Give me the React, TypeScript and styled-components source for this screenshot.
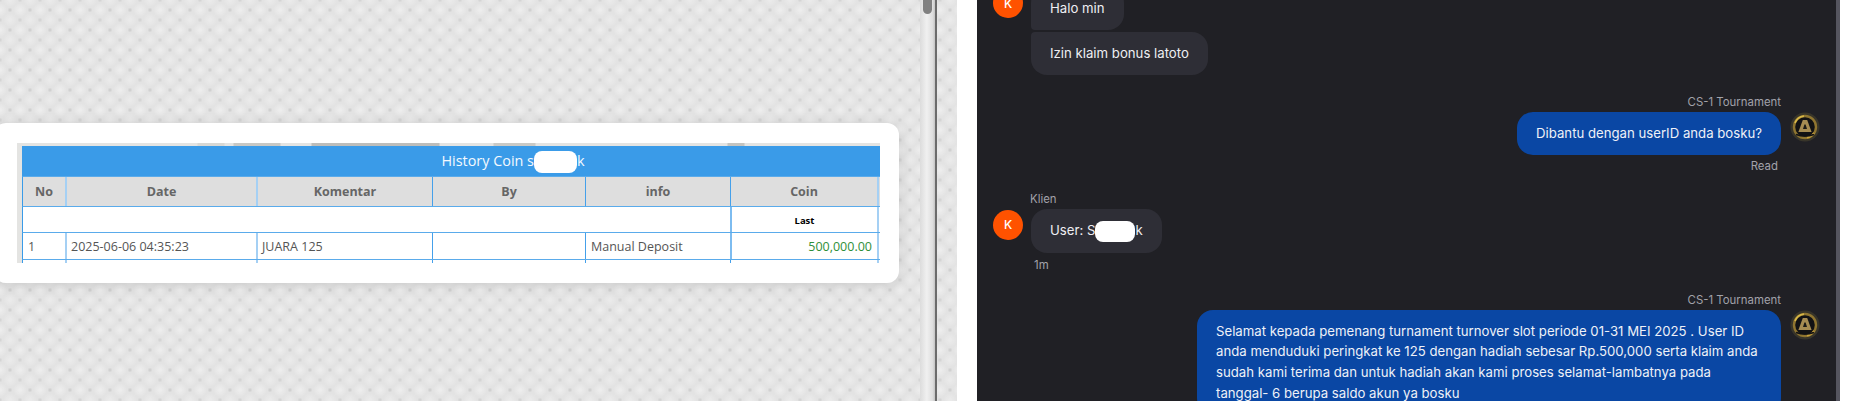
import React from "react";
import styled, { createGlobalStyle } from "styled-components";

const GlobalStyle = createGlobalStyle`
  html, body {
    margin: 0;
    padding: 0;
    background: #ffffff;
    overflow: hidden;
  }
  * {
    box-sizing: border-box;
  }
`;

const COLUMNS = "42px 191px 176px 153px 145px 147px 1fr";

export default function App() {
  return (
    <>
      <GlobalStyle />
      <Screen>
        <AdminPane>
          <AdminMain>
            <Card>
              <TableFrame>
                <TopStrip />
                <TableBody>
                  <TableTitle>
                    History Coin s
                    <Redact $w={43} $h={22} />k
                  </TableTitle>
                  <TableRow $h={30} $header>
                    <HeadCell>No</HeadCell>
                    <HeadCell $soft>Date</HeadCell>
                    <HeadCell $soft>Komentar</HeadCell>
                    <HeadCell>By</HeadCell>
                    <HeadCell>info</HeadCell>
                    <HeadCell>Coin</HeadCell>
                    <HeadCell $soft />
                  </TableRow>
                  <TableRow $h={26}>
                    <BlankCell />
                    <LastCell>Last</LastCell>
                    <DataCell $soft />
                  </TableRow>
                  <TableRow $h={27}>
                    <DataCell>1</DataCell>
                    <DataCell $soft>2025-06-06 04:35:23</DataCell>
                    <DataCell $soft>JUARA 125</DataCell>
                    <DataCell />
                    <DataCell>Manual Deposit</DataCell>
                    <AmountCell>500,000.00</AmountCell>
                    <DataCell $soft />
                  </TableRow>
                  <TableRow $h={10}>
                    <DataCell />
                    <DataCell $soft />
                    <DataCell $soft />
                    <DataCell />
                    <DataCell />
                    <DataCell />
                    <DataCell $soft />
                  </TableRow>
                </TableBody>
              </TableFrame>
            </Card>
          </AdminMain>
          <ScrollTrack>
            <ScrollThumb />
          </ScrollTrack>
          <PaneDivider />
          <TextureStrip />
        </AdminPane>

        <Gutter />

        <ChatPane>
          <IncomingGroup $top={-13}>
            <IncomingRow>
              <ClientAvatar $shift={1}>K</ClientAvatar>
              <BubbleStack>
                <ClientBubble $corner="first">Halo min</ClientBubble>
                <ClientBubble $corner="last">Izin klaim bonus latoto</ClientBubble>
              </BubbleStack>
            </IncomingRow>
          </IncomingGroup>

          <OutgoingGroup $top={20}>
            <AgentName>CS-1 Tournament</AgentName>
            <OutgoingRow>
              <AgentBubble>Dibantu dengan userID anda bosku?</AgentBubble>
              <AgentAvatar />
            </OutgoingRow>
            <ReadMark>Read</ReadMark>
          </OutgoingGroup>

          <IncomingGroup $top={19}>
            <ClientName>Klien</ClientName>
            <IncomingRow>
              <ClientAvatar $shift={1}>K</ClientAvatar>
              <ClientBubble>
                User: S
                <Redact $w={40} $h={21} />k
              </ClientBubble>
            </IncomingRow>
            <TimeMark>1m</TimeMark>
          </IncomingGroup>

          <OutgoingGroup $top={21}>
            <AgentName>CS-1 Tournament</AgentName>
            <OutgoingRow>
              <AgentBubble $wide>
                Selamat kepada pemenang turnament turnover slot periode 01-31 MEI 2025 . User ID
                anda menduduki peringkat ke 125 dengan hadiah sebesar Rp.500,000 serta klaim anda
                sudah kami terima dan untuk hadiah akan kami proses selamat-lambatnya pada
                tanggal- 6 berupa saldo akun ya bosku
              </AgentBubble>
              <AgentAvatar />
            </OutgoingRow>
          </OutgoingGroup>
        </ChatPane>

        <ChatEdge />
      </Screen>
    </>
  );
}

function AgentAvatar() {
  return (
    <AvatarBadge viewBox="0 0 30 30" aria-hidden="true">
      <circle cx="15" cy="15" r="14.5" fill="#38352a" />
      <circle cx="15" cy="15" r="11" fill="#121214" stroke="#8f7530" strokeWidth="2.4" />
      <path d="M5 11a11 11 0 0 1 9-7" fill="none" stroke="#d8b848" strokeWidth="1.6" />
      <path d="M24 21a11 11 0 0 1-7 4.8" fill="none" stroke="#c8a23c" strokeWidth="1.6" />
      <path d="M12.8 8h4.4L21.6 20H8.4z" fill="#a68c52" />
      <path d="M14.4 12.5h1.2l1.4 4.5h-4z" fill="#1c1a16" />
      <path d="M6 22.5q9 3 18 0" fill="none" stroke="#121214" strokeWidth="1.6" />
    </AvatarBadge>
  );
}

const Screen = styled.div`
  display: flex;
  width: 1852px;
  height: 401px;
  overflow: hidden;
  background: #ffffff;
`;

/* left window: coin history popup on a woven grey wallpaper */
const AdminPane = styled.div`
  display: flex;
  flex: 0 0 957px;
  height: 100%;
  background-color: #e3e3e3;
  background-image:
    radial-gradient(circle, #cbcbcb 0, rgba(203, 203, 203, 0) 2.5px),
    radial-gradient(circle, #d0d0d0 0, rgba(208, 208, 208, 0) 2.5px),
    radial-gradient(circle, #eeeeee 0, rgba(238, 238, 238, 0) 7px),
    radial-gradient(circle, #ebebeb 0, rgba(235, 235, 235, 0) 7px);
  background-size: 20px 20px;
  background-position: 0 0, 10px 10px, 10px 0, 0 10px;
`;

const AdminMain = styled.div`
  flex: 0 0 920px;
  padding-top: 123px;
  overflow: hidden;
`;

const Card = styled.div`
  width: 905px;
  height: 160px;
  margin-left: -6px;
  padding: 20px 19px 20px 23px;
  background: #ffffff;
  border-radius: 12px;
  box-shadow: 0 2px 14px rgba(0, 0, 0, 0.12);
`;

const TableFrame = styled.div`
  height: 120px;
  overflow: hidden;
  background: #e4e4e2;
  font-family: "Open Sans", "Noto Sans", sans-serif;
`;

const TopStrip = styled.div`
  height: 3px;
  background: linear-gradient(
    90deg,
    #e4e4e2 0,
    #e4e4e2 180px,
    #d8d8d4 181px,
    #d8d8d4 207px,
    #e4e4e2 208px,
    #e4e4e2 216px,
    #c8c8c4 217px,
    #c8c8c4 263px,
    #e4e4e2 264px,
    #e4e4e2 294px,
    #bdbdba 295px,
    #bdbdba 422px,
    #e4e4e2 423px,
    #e4e4e2 476px,
    #cacac6 477px,
    #cacac6 518px,
    #e4e4e2 519px,
    #e4e4e2 710px,
    #c4c4c0 711px,
    #c4c4c0 727px,
    #e4e4e2 728px
  );
`;

const TableBody = styled.div`
  width: 982px;
  margin-left: 5px;
  background: #ffffff;
`;

const TableTitle = styled.div`
  height: 30px;
  line-height: 30px;
  text-align: center;
  font-size: 14.4px;
  color: #f4f9fe;
  background: #3a9be8;
`;

const TableRow = styled.div<{ $h: number; $header?: boolean }>`
  display: grid;
  grid-template-columns: ${COLUMNS};
  height: ${(p) => p.$h}px;
  background: ${(p) => (p.$header ? "#dedede" : "#ffffff")};
  border-top: 1px solid #5aabeb;
  border-left: 1px solid #3a9be8;
`;

const CellBase = styled.div<{ $soft?: boolean }>`
  display: flex;
  align-items: center;
  min-width: 0;
  font-size: 12.5px;
  color: #555555;
  white-space: nowrap;
  border-left: ${(p) => (p.$soft ? "2px solid #a5d0f4" : "1px solid #45a0ea")};
  &:first-child {
    border-left: 0;
  }
`;

const HeadCell = styled(CellBase)`
  justify-content: center;
  font-weight: 700;
  color: #666666;
`;

const DataCell = styled(CellBase)`
  padding-left: ${(p) => (p.$soft ? "4px" : "5px")};
`;

const BlankCell = styled(CellBase)`
  grid-column: span 5;
`;

const LastCell = styled(CellBase)`
  justify-content: center;
  padding-top: 1px;
  font-size: 9.5px;
  font-weight: 700;
  color: #000000;
  border-left: 2px solid #7dbcf0;
`;

const AmountCell = styled(CellBase)`
  justify-content: flex-end;
  padding-right: 5px;
  color: #2f8f3a;
  border-left: 2px solid #7dbcf0;
`;

const Redact = styled.span<{ $w: number; $h: number }>`
  display: inline-block;
  width: ${(p) => p.$w}px;
  height: ${(p) => p.$h}px;
  vertical-align: middle;
  background: #ffffff;
  border-radius: 8px;
`;

const ScrollTrack = styled.div`
  flex: 0 0 15px;
  padding-left: 3px;
  background: linear-gradient(90deg, #dcdcdc 0, #f0f0f0 45%, #dedede 85%, #c4c4c4 100%);
`;

const ScrollThumb = styled.div`
  width: 9px;
  height: 14px;
  background: #808080;
  border-radius: 0 0 5px 5px;
`;

const PaneDivider = styled.div`
  flex: 0 0 2px;
  background: #6c6c6c;
`;

const TextureStrip = styled.div`
  flex: 1;
`;

const Gutter = styled.div`
  flex: 0 0 20px;
  background: #ffffff;
`;

/* right window: support chat */
const ChatPane = styled.div`
  display: flex;
  flex-direction: column;
  flex: 0 0 859px;
  height: 100%;
  padding: 0 17px 0 16px;
  overflow: hidden;
  background: #202025;
  font-family: Inter, "Noto Sans", sans-serif;
`;

const ChatEdge = styled.div`
  flex: 0 0 4px;
  background: #55555f;
`;

const IncomingGroup = styled.div<{ $top: number }>`
  display: flex;
  flex-direction: column;
  align-items: flex-start;
  flex: none;
  margin-top: ${(p) => p.$top}px;
`;

const OutgoingGroup = styled(IncomingGroup)`
  align-items: flex-end;
  padding-right: 38px;
`;

const IncomingRow = styled.div`
  display: flex;
  align-items: flex-start;
  gap: 8px;
`;

const OutgoingRow = styled.div`
  display: flex;
  align-items: flex-start;
  gap: 9px;
  margin-right: -39px;
`;

const BubbleStack = styled.div`
  display: flex;
  flex-direction: column;
  align-items: flex-start;
  gap: 2px;
`;

const ClientAvatar = styled.div<{ $shift: number }>`
  display: flex;
  align-items: center;
  justify-content: center;
  flex: none;
  width: 30px;
  height: 30px;
  margin-top: ${(p) => p.$shift}px;
  font-size: 12px;
  font-weight: 500;
  color: #ffffff;
  background: #ff5200;
  border-radius: 50%;
`;

const AvatarBadge = styled.svg`
  flex: none;
  display: block;
  width: 30px;
  height: 30px;
`;

const ClientBubble = styled.div<{ $corner?: "first" | "last" }>`
  padding: 11px 19px;
  font-size: 13.2px;
  line-height: 21px;
  color: #eeeef3;
  background: #2e2e36;
  border-radius: ${(p) =>
    p.$corner === "first"
      ? "16px 16px 16px 4px"
      : p.$corner === "last"
        ? "4px 16px 16px 16px"
        : "16px"};
`;

const AgentBubble = styled.div<{ $wide?: boolean }>`
  width: ${(p) => (p.$wide ? "584px" : "auto")};
  padding: 11px 19px;
  font-size: 13.2px;
  line-height: 20.7px;
  color: #eef1f8;
  background: #0a47a4;
  border-radius: 16px;
`;

const MetaText = styled.div`
  height: 14px;
  font-size: 11.4px;
  line-height: 14px;
  color: #a2a2aa;
`;

const AgentName = styled(MetaText)`
  margin-bottom: 3px;
`;

const ClientName = styled(MetaText)`
  margin-bottom: 3px;
  margin-left: 37px;
`;

const ReadMark = styled(MetaText)`
  margin-top: 4px;
  margin-right: 3px;
`;

const TimeMark = styled(MetaText)`
  margin-top: 5px;
  margin-left: 41px;
`;
